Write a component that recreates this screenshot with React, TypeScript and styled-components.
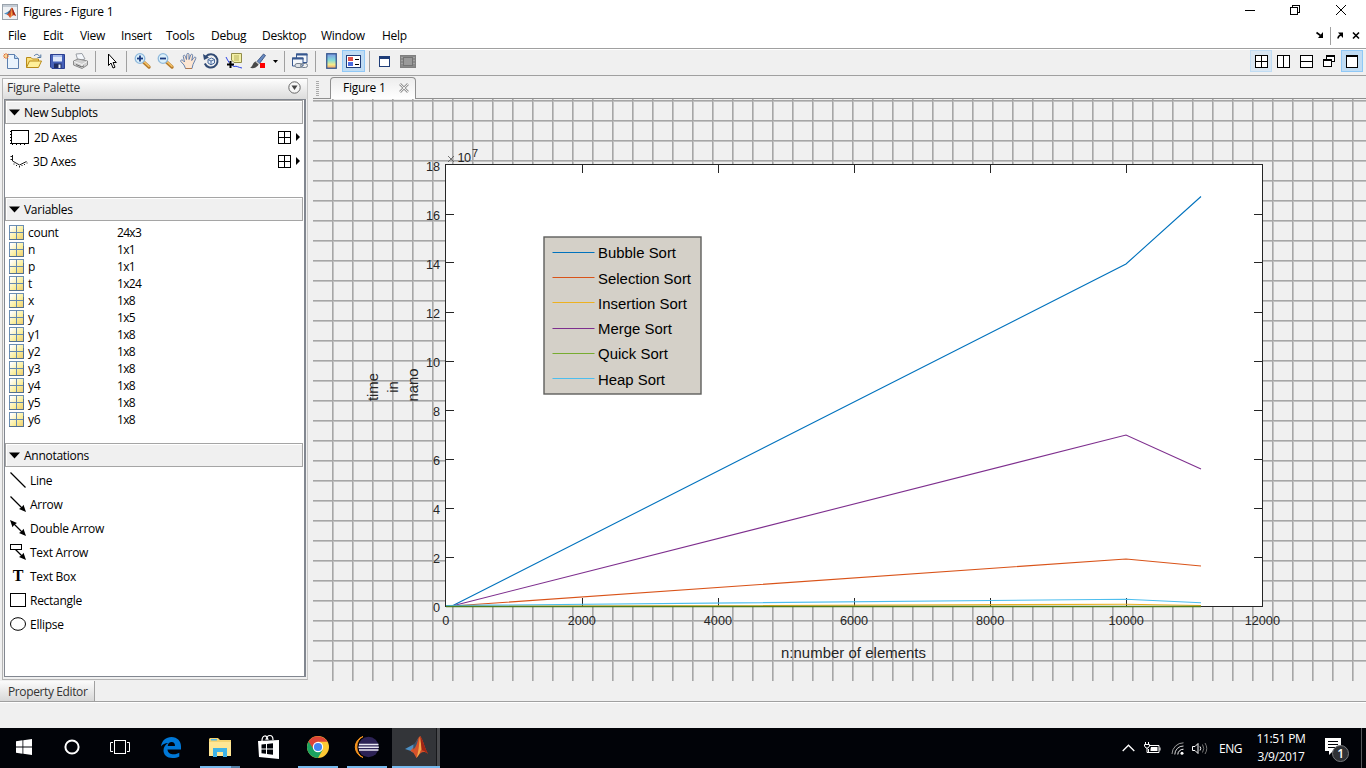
import React from 'react';
import styled, { createGlobalStyle, css } from 'styled-components';

const UI = '"Open Sans", "Noto Sans", sans-serif';
const PLOT = '"Liberation Sans", Arial, sans-serif';

const Global = createGlobalStyle`
  html, body { margin: 0; padding: 0; overflow: hidden; background: #fff; }
  * { box-sizing: border-box; }
  svg { display: block; flex: none; overflow: visible; }
  body { font-family: ${UI}; font-size: 12px; letter-spacing: -0.28px; color: #000; }
`;

const Screen = styled.div`
  width: 1366px;
  height: 768px;
  display: flex;
  flex-direction: column;
  background: #f0f0f0;
  white-space: nowrap;
`;

const TitleBar = styled.div`
  height: 24px;
  background: #fff;
  display: flex;
  align-items: flex-start;
  padding: 4px 0 0 2px;
`;
const TitleText = styled.div`
  margin-left: 5px;
  line-height: 16px;
  flex: 1;
`;
const WindowButtons = styled.div`
  width: 121px;
  display: flex;
  justify-content: space-between;
  padding-right: 20px;
`;

const MenuBar = styled.div`
  height: 24px;
  background: #fff;
  display: flex;
  padding-left: 8px;
`;
const MenuItem = styled.div<{ $w: number }>`
  width: ${p => p.$w}px;
  line-height: 24px;
`;
const DockControls = styled.div`
  margin-left: auto;
  display: flex;
  align-items: center;
  padding-right: 6px;
`;

const ToolBar = styled.div`
  height: 28px;
  flex: none;
  border-top: 1px solid #a0a0a0;
  border-bottom: 1px solid #a0a0a0;
  box-shadow: inset 0 1px #fff;
  display: flex;
  padding-top: 1px;
`;
const Tool = styled.div<{ $w?: number; $ml?: number; $on?: 'soft' | 'full' }>`
  width: ${p => p.$w ?? 16}px;
  margin-left: ${p => p.$ml ?? 0}px;
  height: 22px;
  display: flex;
  align-items: center;
  justify-content: center;
  ${p => p.$on === 'full' && css`background: #c0dcf3; border: 1px solid #90c8f6;`}
  ${p => p.$on === 'soft' && css`background: #d9e6f2; border: 1px solid #c0dcf3;`}
`;
const ToolSep = styled.div<{ $ml: number }>`
  width: 1px;
  height: 21px;
  margin: 1px 0 0 ${p => p.$ml}px;
  background: #a0a0a0;
`;

const Workspace = styled.div`
  height: 605px;
  display: flex;
`;
const Sidebar = styled.div`
  width: 313px;
  padding: 2px 0 0 2px;
`;
const PaletteFrame = styled.div`
  width: 306px;
  height: 602px;
  border: 1px solid #b4b4b4;
  border-right-color: #c8c8c8;
  background: #f0f0f0;
`;
const PaletteHeader = styled.div`
  height: 20px;
  display: flex;
  align-items: center;
  justify-content: space-between;
  padding: 0 6px 3px 4px;
  color: #333;
  background: linear-gradient(#fdfdfd, #dcdcdc);
`;
const PaletteBody = styled.div`
  height: 578px;
  margin: 0 1px;
  border: 1px solid #828790;
  border-right-width: 2px;
  background: #fff;
`;
const SectionHeader = styled.div`
  width: 298px;
  height: 24px;
  border: 1px solid #a5a5a5;
  box-shadow: inset 1px 1px #fff;
  background: #f0f0f0;
  display: flex;
  align-items: center;
  gap: 4px;
  padding-left: 3px;
`;
const SectionBody = styled.div<{ $h: number; $pt: number }>`
  height: ${p => p.$h}px;
  padding: ${p => p.$pt}px 4px 0 4px;
`;
const AxesRow = styled.div`
  height: 24px;
  display: flex;
  align-items: center;
  padding-left: 1px;
`;
const AxesName = styled.div<{ $ml: number }>`
  margin-left: ${p => p.$ml}px;
  flex: 1;
`;
const AxesPick = styled.div`
  display: flex;
  align-items: center;
  gap: 5px;
`;
const VarRow = styled.div`
  height: 17px;
  display: grid;
  grid-template-columns: 19px 89px 1fr;
  align-items: center;
  line-height: 17px;
`;
const VarText = styled.span`
  padding-top: 1px;
`;
const VarSize = styled(VarText)`
  letter-spacing: -0.7px;
`;
const ToolRow = styled.div`
  height: 24px;
  display: flex;
  align-items: center;
  gap: 4px;
  padding-left: 1px;
`;
const SerifT = styled.div`
  width: 16px;
  text-align: center;
  font: bold 16px/16px "Liberation Serif", serif;
`;

const FigureArea = styled.div`
  flex: 1;
  display: flex;
  flex-direction: column;
`;
const TabStrip = styled.div`
  height: 23px;
  display: flex;
  border-bottom: 1px solid #8f8f8f;
`;
const Grip = styled.div`
  width: 3px;
  height: 15px;
  margin: 5px 0 0 3px;
  background: repeating-linear-gradient(#aaa 0 1px, transparent 1px 2px);
`;
const Tab = styled.div`
  width: 86px;
  height: 22px;
  margin-left: 11px;
  margin-top: 1px;
  border: 1px solid #8f8f8f;
  border-bottom: 0;
  border-radius: 4px 4px 0 0;
  background: linear-gradient(#ededed, #fff);
  display: flex;
  align-items: center;
  justify-content: space-between;
  padding: 0 6px 2px 12px;
`;
const Canvas = styled.div`
  height: 582px;
`;

const BottomTabs = styled.div`
  height: 21px;
  display: flex;
  border-bottom: 1px solid #a0a0a0;
`;
const BottomTab = styled.div`
  width: 95px;
  height: 20px;
  padding-left: 8px;
  line-height: 21px;
  color: #333;
  letter-spacing: -0.38px;
  border-right: 1px solid #a0a0a0;
  background: linear-gradient(#fbfbfb, #d8d8d8);
`;
const StatusBar = styled.div`
  height: 26px;
  border-top: 1px solid #fff;
`;

const TaskBar = styled.div`
  height: 40px;
  display: flex;
  background: #010308;
  color: #fff;
`;
const TaskCell = styled.div<{ $w: number; $active?: boolean }>`
  width: ${p => p.$w}px;
  display: flex;
  flex-direction: column;
  align-items: center;
  justify-content: space-between;
  ${p => p.$active && css`background: linear-gradient(90deg, #333539 44px, #17181b 44px 45px, #4a4b4e 45px);`}
`;
const TaskIcon = styled.div`
  height: 38px;
  display: flex;
  align-items: center;
  justify-content: center;
`;
const Running = styled.div<{ $w: number; $stack?: boolean }>`
  width: ${p => p.$w}px;
  height: 2px;
  background: ${p => (p.$stack ? 'linear-gradient(90deg, #76b9ed 31px, #527fa5 31px)' : '#76b9ed')};
`;
const Tray = styled.div`
  margin-left: auto;
  display: flex;
  align-items: center;
`;
const TraySlot = styled.div<{ $ml: number; $mt?: number }>`
  margin-left: ${p => p.$ml}px;
  margin-top: ${p => p.$mt ?? 0}px;
`;
const Lang = styled.div`
  width: 24px;
  margin-left: 11px;
  letter-spacing: -0.5px;
`;
const Clock = styled.div`
  width: 60px;
  margin-left: 8px;
  text-align: center;
  line-height: 18px;
  letter-spacing: -0.35px;
  padding-bottom: 1px;
`;
const ShowDesktop = styled.div`
  width: 5px;
  height: 40px;
  margin-left: 11px;
  border-left: 1px solid #55575b;
`;

const MatlabPeak = () => (
  <>
    <path d="M0 12.500L8 8L12 11L8 16L5 14Z" fill="#4c8fc4" />
    <path d="M5 14C9 12 11 2 14.500 0C17 3 19 12 22 17C18 14 15 15 11 21L8 16Z" fill="#d4512a" />
    <path d="M14.500 0C13 7 14 12 11 21C15 17 14 14 16 13Z" fill="#f3a84b" />
    <path d="M14.500 0C17 3 19 12 22 17C19 14.500 17 13.500 16 13.500Z" fill="#a02414" />
    <path d="M8 8C10 7 11.500 4 13 1.500C12 6 10.500 11 8 13Z" fill="#35536e" />
  </>
);

const AppIcon = () => (
  <svg width="16" height="16" viewBox="0 0 16 16">
    <rect x="0.500" y="0.500" width="15" height="15" fill="#eef1f4" stroke="#9aa3ac" />
    <rect x="1" y="1" width="14" height="2" fill="#c4ccd5" />
    <g transform="translate(2 3.500) scale(.55 .5)"><MatlabPeak /></g>
  </svg>
);

const Panes = ({ v, h }: { v?: boolean; h?: boolean }) => (
  <svg width="13" height="13" viewBox="0 0 13 13" stroke="#000" fill="none" shapeRendering="crispEdges">
    <rect x="0.500" y="0.500" width="12" height="12" fill="#fff" />
    {v && <path d="M6.500 0V13" />}
    {h && <path d="M0 6.500H13" />}
  </svg>
);

const NewIcon = () => (
  <svg width="16" height="16" viewBox="0 0 16 16">
    <path d="M4.500 1.500H11.500L15.500 5.500V15.500H4.500Z" fill="#e9f3fd" stroke="#5c7fae" />
    <path d="M11.500 1.500V5.500H15.500" fill="#b8d4f1" stroke="#5c7fae" />
    <path d="M3 0V6M0 3H6M.8 .8L5.200 5.200M5.200 .8L.8 5.200" stroke="#e8742c" />
    <circle cx="3" cy="3" r="1.100" fill="#fff3a0" />
  </svg>
);
const OpenIcon = () => (
  <svg width="16" height="16" viewBox="0 0 16 16">
    <path d="M.5 14.500V4.500H5L6.500 6H12.500V8" fill="#fbe07a" stroke="#b88a18" />
    <path d="M.5 14.500L3.500 8H15.500L12.500 14.500Z" fill="#fff09a" stroke="#b88a18" />
    <path d="M8 3C10 .5 12.500 1 13.500 3.500M14.800 1.500V4.500H11.500" fill="none" stroke="#4c729f" />
  </svg>
);
const SaveIcon = () => (
  <svg width="15" height="15" viewBox="0 0 15 15">
    <path d="M.5 .5H14.500V14.500H2L.5 13Z" fill="#4560b8" stroke="#2b3f90" />
    <path d="M3 1H12V7.500H3Z" fill="#dfe8fa" />
    <path d="M3 1H12V3H3Z" fill="#a8bdec" />
    <path d="M4 9.500H11.500V14H4Z" fill="#1f2c60" />
    <path d="M8.500 10.500H10.500V14H8.500Z" fill="#e7edfb" />
  </svg>
);
const PrintIcon = () => (
  <svg width="15" height="16" viewBox="0 0 15 16">
    <path d="M3 1L9 .5L12 6L5 8Z" fill="#f4f7fb" stroke="#9b9fa5" />
    <path d="M.5 8L5 6L14.500 8V12L9 15.500L.5 12Z" fill="#cfcfcf" stroke="#8b8b8b" />
    <path d="M1 8.500L9 11.500L14 8.500M9 11.500V15" fill="none" stroke="#f4f4f4" />
    <path d="M3 11.500L9 14L11 12.700" fill="none" stroke="#666" />
  </svg>
);
const PointerIcon = () => (
  <svg width="10" height="16" viewBox="0 0 10 16">
    <path d="M1.500 1V12.500L4 10L6 15L8 14.200L6 9.500H9.300Z" fill="#fff" stroke="#000" />
  </svg>
);
const ZoomIcon = ({ plus }: { plus?: boolean }) => (
  <svg width="17" height="16" viewBox="0 0 17 16">
    <path d="M9.500 9L15 14" stroke="#b77c2c" strokeWidth="3.400" strokeLinecap="round" />
    <path d="M10 8.800L15 13.300" stroke="#f5c469" strokeWidth="1.500" strokeLinecap="round" />
    <circle cx="6" cy="5.500" r="4.800" fill="#dcf0fb" stroke="#8fb9dc" strokeWidth="1.300" />
    <path d="M3 5.500H9" stroke="#1a3a80" strokeWidth="1.800" />
    {plus && <path d="M6 2.500V8.500" stroke="#1a3a80" strokeWidth="1.800" />}
  </svg>
);
const HandIcon = () => (
  <svg width="17" height="16" viewBox="0 0 17 16">
    <path d="M5.500 15.500L4 12L.8 8.500C0 7 2 6.500 3 7.500L4.500 9L3.300 3.500C3 2 5 1.800 5.400 3.300L6.500 6.500L6.800 1.500C7 0 9 0 9 1.500V6.500L10.700 2C11.200.7 13 1.200 12.700 2.800L11.700 7.500L14 4.500C15 3.500 16.500 4.300 15.700 5.800L13 11.500L12 15.500Z" fill="#fde6d2" stroke="#5877a8" strokeWidth=".9" />
    <path d="M5.500 15.500H12" stroke="#b07a52" />
  </svg>
);
const RotateIcon = () => (
  <svg width="16" height="16" viewBox="0 0 16 16" fill="none">
    <path d="M3 3.500A6.600 6.600 0 1 1 1.800 10.500" stroke="#304a74" strokeWidth="2" />
    <path d="M0 1L1 7L6 4.500Z" fill="#304a74" />
    <path d="M5 6.500L8.500 5L11.500 6.500V10L8 11.800L5 10ZM5 6.500L8 8L11.500 6.500M8 8V11.500" stroke="#4a6a9c" fill="#e5effa" />
  </svg>
);
const DataCursorIcon = () => (
  <svg width="16" height="16" viewBox="0 0 16 16">
    <path d="M0 4C2 8 4 12 8 13.500C11 12.500 12 14.500 16 15" fill="none" stroke="#2b43e8" />
    <path d="M5.500 .5H15.500V9.500H8L5.500 7Z" fill="#f3f0a5" stroke="#918c4a" />
    <path d="M8 3H13M8 5H13M8 7H13" stroke="#b9b260" />
    <path d="M4.500 8V15M1 11.500H8" stroke="#000" strokeWidth="2" />
  </svg>
);
const BrushIcon = () => (
  <svg width="16" height="16" viewBox="0 0 16 16">
    <path d="M7 8.500L13.500 1L15.500 2.500L9.500 10.500Z" fill="#6789bf" stroke="#2f4777" strokeWidth=".8" />
    <path d="M0 14.500C3 14 2 10 5.500 8.500C8 9 9.500 10.500 8 12.500C6 15 2 16 0 14.500Z" fill="#494949" />
    <path d="M6 8.500L9 11" stroke="#c9c9c9" strokeWidth="1.500" />
    <path d="M10 10H15V15H10Z" fill="#f00" />
  </svg>
);
const LinkIcon = () => (
  <svg width="16" height="16" viewBox="0 0 16 16">
    <path d="M4.500 1H15V9.500H4.500Z" fill="#f4f7fb" stroke="#36578f" />
    <path d="M4 1.500H15.500" stroke="#36578f" strokeWidth="2" />
    <path d="M.5 5H11V13H.5Z" fill="#f4f7fb" stroke="#36578f" />
    <path d="M0 5.500H11.500" stroke="#36578f" strokeWidth="2" />
    <rect x="3" y="10.500" width="7" height="4" rx="2" fill="#dfe3e8" stroke="#74808e" />
    <rect x="8.500" y="10.500" width="7" height="4" rx="2" fill="none" stroke="#74808e" />
  </svg>
);
const ColorbarIcon = () => (
  <svg width="11" height="16" viewBox="0 0 11 16">
    <defs><linearGradient id="cb" x1="0" x2="0" y1="0" y2="1"><stop offset="0" stopColor="#7d97e4" /><stop offset=".45" stopColor="#84dcd8" /><stop offset=".75" stopColor="#f5eb8a" /><stop offset="1" stopColor="#ef9c6d" /></linearGradient></defs>
    <rect x=".75" y=".75" width="9.500" height="14.500" fill="url(#cb)" stroke="#36578f" strokeWidth="1.300" />
  </svg>
);
const LegendIcon = () => (
  <svg width="15" height="13" viewBox="0 0 15 13" shapeRendering="crispEdges">
    <rect x=".5" y=".5" width="14" height="12" fill="#fff" stroke="#1f3d78" />
    <path d="M2 2H7V6H2Z" fill="#e0514a" /><path d="M2 7H7V11H2Z" fill="#4a6be0" />
    <path d="M9 4.500H13M9 9.500H13" stroke="#000" />
  </svg>
);
const WindowIcon = () => (
  <svg width="11" height="11" viewBox="0 0 11 11" shapeRendering="crispEdges">
    <rect x=".5" y=".5" width="10" height="10" fill="#fff" stroke="#1f3d78" /><path d="M0 0H11V3H0Z" fill="#1f3d78" />
  </svg>
);
const GrayPlotIcon = () => (
  <svg width="16" height="13" viewBox="0 0 16 13" shapeRendering="crispEdges">
    <rect x=".5" y=".5" width="15" height="12" fill="#8a8a8a" stroke="#808080" />
    <rect x="3.500" y="2.500" width="9" height="8" fill="#9a9a9a" stroke="#747474" />
    <path d="M1 2.500H3M1 5.500H3M1 8.500H3M13 2.500H15M13 5.500H15M13 8.500H15" stroke="#a2a2a2" />
  </svg>
);
const CascadeIcon = () => (
  <svg width="12" height="12" viewBox="0 0 12 12" shapeRendering="crispEdges" fill="#fff" stroke="#000">
    <rect x="3.500" y=".5" width="8" height="6" /><path d="M3 1.500H12" /><rect x=".5" y="4.500" width="8" height="7" /><path d="M0 5.500H9" />
  </svg>
);
const SingleIcon = () => (
  <svg width="12" height="13" viewBox="0 0 12 13" shapeRendering="crispEdges" fill="#fff" stroke="#000">
    <rect x=".5" y=".5" width="11" height="12" /><path d="M0 1.500H12" />
  </svg>
);

const Triangle = () => <svg width="11" height="7" viewBox="0 0 11 7"><path d="M0 .5H11L5.500 6.500Z" fill="#000" /></svg>;
const SideArrow = () => <svg width="4" height="8" viewBox="0 0 4 8"><path d="M0 0L4 4L0 8Z" /></svg>;
const MatrixIcon = () => (
  <svg width="15" height="15" viewBox="0 0 15 15" shapeRendering="crispEdges">
    <defs><linearGradient id="mx" x1="0" y1="0" x2="1" y2="1"><stop offset=".1" stopColor="#fff" /><stop offset=".6" stopColor="#fbee9a" /><stop offset="1" stopColor="#ecc96c" /></linearGradient></defs>
    <rect x=".5" y=".5" width="14" height="14" fill="url(#mx)" stroke="#6c8fb4" />
    <path d="M7.500 0V15M0 7.500H15" stroke="#6488b0" /><path d="M0 14.500H15M14.500 4V15" stroke="#53708f" />
  </svg>
);
const Axes2D = () => (
  <svg width="19" height="15" viewBox="0 0 19 15" shapeRendering="crispEdges" fill="none" stroke="#000">
    <rect x="1.500" y=".5" width="17" height="13" />
    <path d="M.5 1V14" strokeDasharray="1 2" /><path d="M2 14.500H18" strokeDasharray="1 3" />
  </svg>
);
const Axes3D = () => (
  <svg width="18" height="13" viewBox="0 0 18 13" fill="none" stroke="#000">
    <path d="M2.500 0V6L9.500 10L16.500 6.500" strokeWidth=".9" />
    <path d="M.5 1.500H2M.5 4.500H2M4 8.500V9.500M6.500 10V11M9.500 11V12.500M12 10V11M14.500 9V10M17 7.500V8.500" strokeWidth=".9" />
  </svg>
);
const Head = () => <path d="M16 16L13.500 8.800L11.800 11.200L9 13Z" fill="#000" />;
const LineIcon = () => <svg width="16" height="16" viewBox="0 0 16 16"><path d="M.5 .5L15.500 15.500" stroke="#000" strokeWidth="1.200" /></svg>;
const ArrowIcon = () => <svg width="16" height="16" viewBox="0 0 16 16"><path d="M.5 .5L13 13" stroke="#000" strokeWidth="1.200" /><Head /></svg>;
const DoubleIcon = () => <svg width="16" height="16" viewBox="0 0 16 16"><path d="M2 2L13 13" stroke="#000" strokeWidth="1.200" /><Head /><g transform="rotate(180 8 8)"><Head /></g></svg>;
const TextArrowIcon = () => <svg width="16" height="16" viewBox="0 0 16 16"><path d="M5 5L13 13" stroke="#000" strokeWidth="1.200" /><rect x=".5" y=".5" width="11" height="5" fill="#fff" stroke="#000" /><Head /></svg>;
const RectIcon = () => <svg width="16" height="14" viewBox="0 0 16 14"><rect x=".5" y=".5" width="15" height="13" fill="#fff" stroke="#000" /></svg>;
const EllipseIcon = () => <svg width="16" height="14" viewBox="0 0 16 14"><ellipse cx="8" cy="7" rx="7.500" ry="6.300" fill="#fff" stroke="#000" /></svg>;

const menus: [string, number][] = [['File', 35], ['Edit', 37], ['View', 41], ['Insert', 45], ['Tools', 45], ['Debug', 51], ['Desktop', 59], ['Window', 61], ['Help', 40]];
const variables = [['count', '24x3'], ['n', '1x1'], ['p', '1x1'], ['t', '1x24'], ['x', '1x8'], ['y', '1x5'], ['y1', '1x8'], ['y2', '1x8'], ['y3', '1x8'], ['y4', '1x8'], ['y5', '1x8'], ['y6', '1x8']];
const annotations: [string, React.ReactNode][] = [
  ['Line', <LineIcon />], ['Arrow', <ArrowIcon />], ['Double Arrow', <DoubleIcon />], ['Text Arrow', <TextArrowIcon />],
  ['Text Box', <SerifT>T</SerifT>], ['Rectangle', <RectIcon />], ['Ellipse', <EllipseIcon />],
];
const legend: { name: string; color: string; width: number; base: number }[] = [
  { name: 'Bubble Sort', color: '#0072bd', width: 78, base: 258 },
  { name: 'Selection Sort', color: '#d95319', width: 93, base: 284 },
  { name: 'Insertion Sort', color: '#edb120', width: 89, base: 309 },
  { name: 'Merge Sort', color: '#7e2f8e', width: 74, base: 334 },
  { name: 'Quick Sort', color: '#77ac30', width: 70, base: 359 },
  { name: 'Heap Sort', color: '#4dbeee', width: 67, base: 385 },
];
const xTicks = [582, 718, 854, 990, 1126];
const yTicks = [557, 508, 459, 410, 361, 312, 262, 214];

const range = (n: number) => Array.from({ length: n }, (_, i) => i);

const PlotSvg = styled.svg`
  overflow: hidden;
  font-family: ${PLOT};
  letter-spacing: 0;
`;

const Plot = () => (
  <PlotSvg width="1053" height="582" viewBox="313 99 1053 582">
    <g shapeRendering="crispEdges">
      <rect x="313" y="99" width="1053" height="582" fill="#f0f0f0" />
      {range(29).map(i => <rect key={i} x="313" y={101 + i * 20} width="1053" height="1" fill="#c2c2c2" />)}
      {range(52).map(i => <rect key={i} x={333 + i * 20} y="99" width="1" height="582" fill="#c2c2c2" />)}
      {range(29).map(i => <rect key={i} x="313" y={100 + i * 20} width="1053" height="1" fill="#a6a6a6" />)}
      {range(52).map(i => <rect key={i} x={332 + i * 20} y="99" width="1" height="582" fill="#a6a6a6" />)}
      <rect x="445.500" y="164.500" width="817" height="442" fill="#fff" stroke="#262626" />
      {xTicks.map(x => <path key={x} d={`M${x + 0.5} 165V173M${x + 0.5} 606V598`} stroke="#262626" />)}
      {yTicks.map(y => <path key={y} d={`M446 ${y + 0.5}H454M1262 ${y + 0.5}H1254`} stroke="#262626" />)}
    </g>
    <g fill="none" strokeWidth="1.100">
      <path d="M452 606L1126 264L1201 196.500" stroke="#0072bd" />
      <path d="M452 606L1126 559L1201 566" stroke="#d95319" />
      <path d="M446 606.500L1126 604.300L1201 605.500" stroke="#edb120" />
      <path d="M452 606L1126 435L1201 469" stroke="#7e2f8e" />
      <path d="M446 605.500L1126 599.300L1201 602.700" stroke="#4dbeee" />
      <path d="M446 606.500H1201" stroke="#4d7a20" strokeWidth="1.300" />
    </g>
    <g fontSize="12.700" fill="#262626">
      {range(7).map(i => <text key={i} x={445.700 + i * 136.100} y="625" textAnchor="middle">{i * 2000}</text>)}
      {range(10).map(i => <text key={i} x="440" y={611.500 - i * 49} textAnchor="end">{i * 2}</text>)}
      <path d="M448 156L454 162M454 156L448 162" stroke="#555" strokeWidth=".8" />
      <text x="457.500" y="162" textLength="13.500">10</text>
      <text x="472" y="156.500" fontSize="11">7</text>
    </g>
    <g fontSize="14.900" fill="#262626">
      <text x="781" y="658" textLength="145">n:number of elements</text>
      <text transform="translate(378 387) rotate(-90)" textAnchor="middle" textLength="28">time</text>
      <text transform="translate(398 387) rotate(-90)" textAnchor="middle">in</text>
      <text transform="translate(418 385) rotate(-90)" textAnchor="middle" textLength="33">nano</text>
    </g>
    <rect x="544" y="237" width="157" height="157" fill="#d4d0c8" stroke="#5e5e5c" strokeWidth="1.400" />
    {legend.map((l, i) => (
      <g key={l.name}>
        <path d={`M552.500 ${252.500 + Math.round(i * 25.200)}H594.500`} stroke={l.color} />
        <text x="598" y={l.base} fontSize="14.900" textLength={l.width}>{l.name}</text>
      </g>
    ))}
  </PlotSvg>
);

export default function App() {
  return (
    <>
      <Global />
      <Screen>
        <TitleBar>
          <AppIcon />
          <TitleText>Figures - Figure 1</TitleText>
          <WindowButtons>
            <svg width="10" height="12" viewBox="0 0 10 12" shapeRendering="crispEdges"><path d="M0 6.500H10" stroke="#000" /></svg>
            <svg width="12" height="12" viewBox="0 0 12 12" fill="none" stroke="#000" shapeRendering="crispEdges"><rect x=".5" y="3.500" width="7" height="7" /><path d="M2.500 3V1.500H9.500V8.500H8" /></svg>
            <svg width="10" height="12" viewBox="0 0 10 12"><path d="M0 1L10 11M10 1L0 11" stroke="#000" strokeWidth="1" /></svg>
          </WindowButtons>
        </TitleBar>
        <MenuBar>
          {menus.map(([m, w]) => <MenuItem key={m} $w={w}>{m}</MenuItem>)}
          <DockControls>
            <svg width="44" height="20" viewBox="0 0 44 20">
              <path d="M.5 6.500L4.500 9.500" stroke="#000" strokeWidth="1.600" /><path d="M7 6V12H2Z" fill="#000" />
              <path d="M14.500 1V19" stroke="#a0a0a0" />
              <path d="M22 6.500H27V12Z" fill="#000" /><path d="M22 12.500C22 10.500 23 9.500 25.500 8.500" stroke="#000" strokeWidth="1.500" fill="none" />
              <path d="M37 6.500L43 12.500M43 6.500L37 12.500" stroke="#000" strokeWidth="1.600" />
            </svg>
          </DockControls>
        </MenuBar>
        <ToolBar>
          <Tool $ml={3}><NewIcon /></Tool>
          <Tool $ml={7}><OpenIcon /></Tool>
          <Tool $ml={7}><SaveIcon /></Tool>
          <Tool $ml={7}><PrintIcon /></Tool>
          <ToolSep $ml={7} />
          <Tool $ml={11} $w={10}><PointerIcon /></Tool>
          <ToolSep $ml={9} />
          <Tool $ml={7}><ZoomIcon plus /></Tool>
          <Tool $ml={7}><ZoomIcon /></Tool>
          <Tool $ml={7}><HandIcon /></Tool>
          <Tool $ml={7}><RotateIcon /></Tool>
          <Tool $ml={7}><DataCursorIcon /></Tool>
          <Tool $ml={8}><BrushIcon /></Tool>
          <Tool $ml={7} $w={5}><svg width="5" height="3" viewBox="0 0 5 3"><path d="M0 0H5L2.500 3Z" /></svg></Tool>
          <ToolSep $ml={6} />
          <Tool $ml={7}><LinkIcon /></Tool>
          <ToolSep $ml={7} />
          <Tool $ml={10} $w={11}><ColorbarIcon /></Tool>
          <Tool $ml={5} $w={23} $on="full"><LegendIcon /></Tool>
          <ToolSep $ml={4} />
          <Tool $ml={9} $w={11}><WindowIcon /></Tool>
          <Tool $ml={10}><GrayPlotIcon /></Tool>
          <Tool $ml={834} $w={22} $on="soft"><Panes v h /></Tool>
          <Tool $ml={5} $w={13}><Panes v /></Tool>
          <Tool $ml={10} $w={13}><Panes h /></Tool>
          <Tool $ml={10} $w={12}><CascadeIcon /></Tool>
          <Tool $ml={6} $w={22} $on="full"><SingleIcon /></Tool>
        </ToolBar>
        <Workspace>
          <Sidebar>
            <PaletteFrame>
              <PaletteHeader>
                Figure Palette
                <svg width="13" height="13" viewBox="0 0 13 13"><circle cx="6.500" cy="6.500" r="5.700" fill="#f6f6f6" stroke="#666" /><path d="M3.500 4.500H9.500L6.500 9Z" fill="#444" /></svg>
              </PaletteHeader>
              <PaletteBody>
                <SectionHeader><Triangle />New Subplots</SectionHeader>
                <SectionBody $h={73} $pt={1}>
                  <AxesRow><Axes2D /><AxesName $ml={5}>2D Axes</AxesName><AxesPick><Panes v h /><SideArrow /></AxesPick></AxesRow>
                  <AxesRow><Axes3D /><AxesName $ml={5}>3D Axes</AxesName><AxesPick><Panes v h /><SideArrow /></AxesPick></AxesRow>
                </SectionBody>
                <SectionHeader><Triangle />Variables</SectionHeader>
                <SectionBody $h={222} $pt={2}>
                  {variables.map(([n, s]) => <VarRow key={n}><MatrixIcon /><VarText>{n}</VarText><VarSize>{s}</VarSize></VarRow>)}
                </SectionBody>
                <SectionHeader><Triangle />Annotations</SectionHeader>
                <SectionBody $h={200} $pt={1}>
                  {annotations.map(([n, icon]) => <ToolRow key={n}>{icon}<span>{n}</span></ToolRow>)}
                </SectionBody>
              </PaletteBody>
            </PaletteFrame>
          </Sidebar>
          <FigureArea>
            <TabStrip>
              <Grip />
              <Tab>Figure 1<svg width="10" height="10" viewBox="0 0 10 10"><path d="M1 1L9 9M9 1L1 9" stroke="#999" strokeWidth="2.600" /><path d="M1 1L9 9M9 1L1 9" stroke="#eee" strokeWidth="1" /></svg></Tab>
            </TabStrip>
            <Canvas><Plot /></Canvas>
          </FigureArea>
        </Workspace>
        <BottomTabs><BottomTab>Property Editor</BottomTab></BottomTabs>
        <StatusBar />
        <TaskBar>
          <TaskCell $w={48}><TaskIcon><svg width="16" height="16" viewBox="0 0 16 16" fill="#fff"><path d="M0 2.200L6.500 1.300V7.500H0ZM7.300 1.200L16 0V7.500H7.300ZM0 8.400H6.500V14.700L0 13.800ZM7.300 8.400H16V16L7.300 14.800Z" /></svg></TaskIcon></TaskCell>
          <TaskCell $w={48}><TaskIcon><svg width="16" height="16" viewBox="0 0 16 16"><circle cx="8" cy="8" r="6.600" fill="none" stroke="#fff" strokeWidth="2" /></svg></TaskIcon></TaskCell>
          <TaskCell $w={48}><TaskIcon><svg width="20" height="14" viewBox="0 0 20 14" fill="none" stroke="#fff"><rect x="4.500" y=".5" width="11" height="13" /><path d="M3 2.500H.5V11.500H3M17 2.500H19.500V11.500H17" /></svg></TaskIcon></TaskCell>
          <TaskCell $w={54}><TaskIcon><svg width="20" height="21" viewBox="0 0 20 21"><path d="M0 9.500C.8 3.500 5 0 10.500 0C16.500 0 20 4.300 20 9.500V12.500H6.500C6.800 16 9.500 17.300 12.500 17.300C15 17.300 17 16.600 18.300 15.800V19.500C16.500 20.500 14 21 11.500 21C5.500 21 2.500 17.500 2.500 13.500C2.500 10 4.500 7.300 7.300 6C4 6 1.500 7.500 0 9.500ZM6.700 8.900H14C14 6.500 12.800 5 10.600 5C8.500 5 7 6.500 6.700 8.900Z" fill="#0078d7" /></svg></TaskIcon></TaskCell>
          <TaskCell $w={44}>
            <TaskIcon><svg width="22" height="19" viewBox="0 0 22 19"><path d="M1 0H9L11 2H22V18H0V1Z" fill="#f5d472" /><path d="M2 1H8V2.500H2Z" fill="#4fb7e8" /><path d="M0 4H22V18H0Z" fill="#ffe694" /><path d="M4 19V10H18V19H14V14H8V19Z" fill="#3fb3e6" /></svg></TaskIcon>
            <Running $w={40} $stack />
          </TaskCell>
          <TaskCell $w={52}><TaskIcon><svg width="21" height="24" viewBox="0 0 21 24"><path d="M0 6L21 5V24L1 22Z" fill="#fff" /><path d="M4 6C4 0 9-1 10 5M8 5C9-1 15-1 15 5" fill="none" stroke="#fff" strokeWidth="1.200" /><path d="M3.500 9.500L8 9V13.500H3.500ZM9 8.900L15 8.300V13.500H9ZM3.500 14.500H8V18.800L3.500 18.300ZM9 14.500H15V19.700L9 19Z" fill="#010308" /></svg></TaskIcon></TaskCell>
          <TaskCell $w={48}>
            <TaskIcon><svg width="22" height="22" viewBox="0 0 22 22"><circle cx="11" cy="11" r="11" fill="#fcc934" /><path d="M11 11L1.500 5.500A11 11 0 0 0 11 22L15.500 14Z" fill="#1aa260" /><path d="M1.500 5.500A11 11 0 0 1 20.500 5.800H11L6.500 13Z" fill="#dc4437" /><circle cx="11" cy="11" r="5.200" fill="#fff" /><circle cx="11" cy="11" r="4.100" fill="#4285f4" /></svg></TaskIcon>
            <Running $w={40} />
          </TaskCell>
          <TaskCell $w={50}>
            <TaskIcon><svg width="24" height="22" viewBox="0 0 24 22"><path d="M8 .5A11 11 0 0 0 8 21.500A12 12 0 0 1 8 .5Z" fill="#f7941e" stroke="#f7941e" /><circle cx="13.500" cy="11" r="10.200" fill="#2c2255" /><path d="M4 8.500H23.500M3.500 11.200H23.800M4 13.900H23.500" stroke="#e8e6f2" strokeWidth="1.500" /></svg></TaskIcon>
            <Running $w={40} />
          </TaskCell>
          <TaskCell $w={48} $active><TaskIcon><svg width="23" height="22" viewBox="0 0 22 21"><MatlabPeak /></svg></TaskIcon><Running $w={48} /></TaskCell>
          <Tray>
            <svg width="13" height="8" viewBox="0 0 13 8"><path d="M.7 7L6.500 1.200L12.300 7" fill="none" stroke="#fff" strokeWidth="1.300" /></svg>
            <TraySlot $ml={9}><svg width="17" height="12" viewBox="0 0 17 12" fill="none" stroke="#fff"><path d="M5.500 3.500H15V10.500H4.500V7" /><path d="M7 5H13.500V9H6.500V7Z" fill="#fff" stroke="none" /><path d="M16 5.500V8.500M1.500 0V2M4.500 0V2M3 6V10.500H5" /><path d="M.5 2.500H5.500V4L4 6H2L.5 4Z" /></svg></TraySlot>
            <TraySlot $ml={10}><svg width="13" height="13" viewBox="0 0 13 13" fill="none" stroke="#999"><path d="M1 12A11.500 11.500 0 0 1 12.500 .8" /><path d="M3.800 12.500A8.500 8.500 0 0 1 12.500 4" stroke="#ddd" /><path d="M6.800 12.500A5.500 5.500 0 0 1 12.500 7.200" stroke="#fff" /><circle cx="11" cy="11.300" r="1.500" fill="#fff" stroke="none" /></svg></TraySlot>
            <TraySlot $ml={8}><svg width="16" height="13" viewBox="0 0 16 13" fill="none" stroke="#fff"><path d="M.5 4.500H3L6 1.500V11.500L3 8.500H.5Z" /><path d="M8 4.500Q9.500 6.500 8 8.500" /><path d="M10.500 2.500Q13 6.500 10.500 10.500M13 1Q16.500 6.500 13 12" stroke="#777" /></svg></TraySlot>
            <Lang>ENG</Lang>
            <Clock>11:51 PM<br />3/9/2017</Clock>
            <TraySlot $ml={14} $mt={4}>
              <svg width="25" height="25" viewBox="0 0 25 25">
                <path d="M0 0H16V13H8L4 17V13H0Z" fill="#fff" /><path d="M3 3.500H13M3 6.500H13M3 9.500H10" stroke="#010308" />
                <circle cx="15.500" cy="15.500" r="8" fill="#2f3135" stroke="#77797c" />
                <text x="15.500" y="19.700" textAnchor="middle" fontFamily={UI} fontSize="12" fontWeight="600" fill="#fff">1</text>
              </svg>
            </TraySlot>
            <ShowDesktop />
          </Tray>
        </TaskBar>
      </Screen>
    </>
  );
}
